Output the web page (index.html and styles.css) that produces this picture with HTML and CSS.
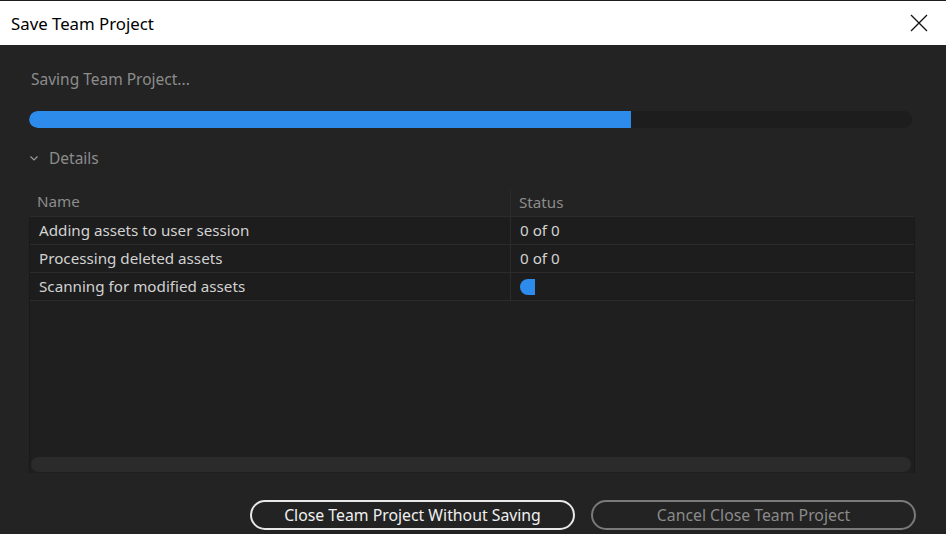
FILE: index.html
```html
<!DOCTYPE html>
<html>
<head>
<meta charset="utf-8">
<link rel="stylesheet" href="styles.css">
</head>
<body>
<div class="window">
  <div class="titlebar">
    <span class="title">Save Team Project</span>
    <svg class="close" width="18" height="18" viewBox="0 0 18 18"><path d="M1 1 L17 17 M17 1 L1 17" stroke="#111" stroke-width="1.3" fill="none"/></svg>
  </div>
  <div class="content">
    <div class="status-line">Saving Team Project...</div>
    <div class="progress"><div class="progress-fill" style="width:68.2%"></div></div>
    <div class="details">
      <svg class="chev" width="10" height="8" viewBox="0 0 10 8"><path d="M1.5 2.5 L5 6 L8.5 2.5" stroke="#9a9a9a" stroke-width="1.2" fill="none"/></svg>
      <span>Details</span>
    </div>
    <div class="table">
      <div class="thead">
        <div class="cell name">Name</div>
        <div class="cell status">Status</div>
      </div>
      <div class="tbody">
        <div class="row"><div class="cell name">Adding assets to user session</div><div class="cell status">0 of 0</div></div>
        <div class="row"><div class="cell name">Processing deleted assets</div><div class="cell status">0 of 0</div></div>
        <div class="row"><div class="cell name">Scanning for modified assets</div><div class="cell status"><span class="spinner"></span></div></div>
        <div class="filler"><div class="filler-col"></div></div>
        <div class="hscroll"></div>
      </div>
    </div>
    <div class="buttons">
      <button class="btn primary">Close Team Project Without Saving</button>
      <button class="btn secondary">Cancel Close Team Project</button>
    </div>
  </div>
</div>
</body>
</html>
```
FILE: styles.css
```css
html, body {
  margin: 0;
  padding: 0;
  background: #232323;
}
.window {
  width: 946px;
  height: 534px;
  display: flex;
  flex-direction: column;
  font-family: "Noto Sans", "Open Sans", sans-serif;
  border-top: 1px solid #1c1c1c;
  box-sizing: border-box;
  overflow: hidden;
}
.titlebar {
  height: 44px;
  background: #ffffff;
  display: flex;
  align-items: center;
  justify-content: space-between;
  padding: 0 18px 0 11px;
  flex: none;
}
.title {
  font-size: 16.8px;
  color: #000;
  padding-top: 1px;
}
.close { display: block; margin-top: -1px; }
.content {
  flex: 1;
  background: #232323;
  padding: 0 30px 0 29px;
  display: flex;
  flex-direction: column;
}
.status-line {
  margin-top: 23px;
  margin-left: 2px;
  font-size: 15.5px;
  color: #8c8c8c;
  line-height: 22px;
}
.progress {
  margin-top: 21px;
  height: 17px;
  border-radius: 9px;
  background: #1d1d1d;
  width: 883px;
  overflow: hidden;
}
.progress-fill {
  height: 100%;
  background: #2d8ceb;
  border-radius: 9px 0 0 9px;
}
.details {
  margin-top: 19px;
  display: flex;
  align-items: center;
  color: #8c8c8c;
  font-size: 15.5px;
  line-height: 22px;
}
.chev { margin-right: 10px; margin-top: -1px; }
.table {
  margin-top: 20px;
  width: 886px;
  display: flex;
  flex-direction: column;
}
.thead {
  display: flex;
  height: 27px;
  align-items: center;
  color: #8c8c8c;
  font-size: 15.2px;
}
.thead .cell.name { width: 473px; padding-left: 8px; border-right: 1px solid #2b2b2b; height: 27px; line-height: 25px; }
.thead .cell.status { padding-left: 8px; line-height: 25px; }
.tbody {
  background: #1f1f1f;
  border-top: 1px solid #2c2c2c;
  border-left: 1px solid #191919;
  border-right: 1px solid #191919;
  height: 257px;
  display: flex;
  flex-direction: column;
  box-sizing: border-box;
}
.row {
  display: flex;
  height: 28px;
  border-bottom: 1px solid #2c2c2c;
  background: #1d1d1d;
  color: #d2d2d2;
  font-size: 15.2px;
  align-items: center;
  box-sizing: border-box;
}
.row .cell.name { width: 471px; padding-left: 9px; border-right: 1px solid #2b2b2b; height: 27px; line-height: 27px; }
.row .cell.status { padding-left: 9px; line-height: 27px; display: flex; align-items: center; }
.spinner {
  display: inline-block;
  width: 15px;
  height: 16px;
  background: #2d8ceb;
  border-radius: 8px 0 0 8px;
}
.filler { flex: 1; display: flex; }
.filler-col { width: 480px; }
.hscroll {
  height: 15px;
  margin: 0 3px 0 1px;
  background: #2b2b2b;
  border-radius: 8px;
  margin-bottom: 1px;
}
.buttons {
  margin-top: 27px;
  display: flex;
  justify-content: flex-end;
  gap: 16px;
  padding-right: 0;
}
.btn {
  font-family: "Noto Sans", "Open Sans", sans-serif;
  font-size: 15.8px;
  height: 30px;
  width: 325px;
  border-radius: 15px;
  background: transparent;
  padding: 0;
  line-height: 24px;
}
.btn.primary {
  border: 2px solid #e8e8e8;
  color: #f0f0f0;
}
.btn.secondary {
  border: 2px solid #7a7a7a;
  color: #8a8a8a;
}
```
